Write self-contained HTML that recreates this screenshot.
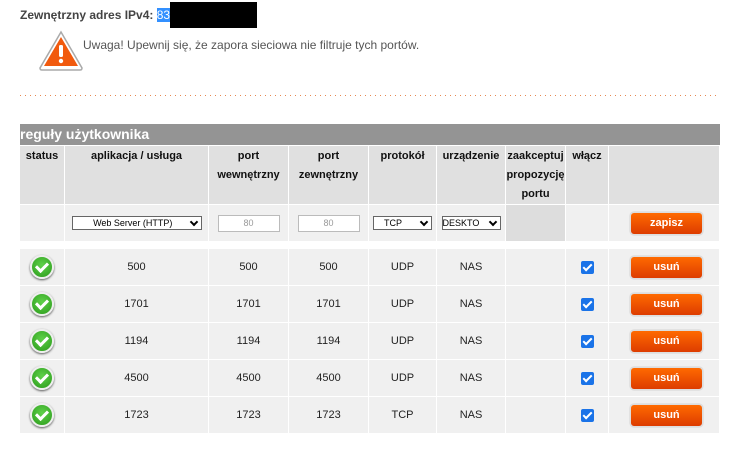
<!DOCTYPE html>
<html><head><meta charset="utf-8">
<style>
body{margin:0;width:741px;height:460px;background:#fff;font-family:"Liberation Sans",Arial,sans-serif;position:relative;overflow:hidden}
.abs{position:absolute}
table{position:absolute;left:19px;top:145px;border-collapse:separate;border-spacing:1px;table-layout:fixed}
td{padding:0;text-align:center;font-size:11px;color:#222;background:#f0f0f0}
tr.h td{background:#e0e0e0;vertical-align:top;line-height:19px;height:57px;padding-top:1px;color:#111;font-weight:bold}
tr.d td{height:36px}
tr.sp td{background:#fff;height:6px}
.ok{display:inline-block;width:20px;height:20px;border-radius:50%;background:radial-gradient(circle at 50% 40%,#5fd14a,#2a9a1a);border:2px solid #eee;box-shadow:0 1px 2px #555;position:relative;vertical-align:middle}
.ok:after{content:"";position:absolute;left:6px;top:3px;width:5px;height:9px;border:solid #fff;border-width:0 3px 3px 0;transform:rotate(45deg)}
.btn{display:inline-block;width:71px;height:21px;line-height:21px;border-radius:4px;background:linear-gradient(#ff6a00,#dd3c00);color:#fff;font-size:11px;font-weight:bold;border:1px solid #ddd;box-shadow:0 0 1px #999;margin-left:5px}
.cb{display:inline-block;width:13px;height:13px;background:#1a73e8;border-radius:2px;position:relative;vertical-align:middle}
.cb:after{content:"";position:absolute;left:4px;top:1px;width:3px;height:7px;border:solid #fff;border-width:0 2px 2px 0;transform:rotate(45deg)}
.sel{display:inline-block;border:1px solid #666;background:#fff;height:12px;font-size:9px;line-height:12px;text-align:left;position:relative;color:#000;vertical-align:middle}
.sel b{position:absolute;right:4px;top:2px;width:4px;height:4px;border:solid #000;border-width:0 2px 2px 0;transform:rotate(45deg)}
.inp{display:inline-block;border:1px solid #bbb;background:#fff;height:15px;width:60px;font-size:9px;color:#999;line-height:15px;vertical-align:middle}
</style></head><body>
<div class="abs" style="left:20px;top:8px;font-size:12px;font-weight:bold;color:#444">Zewnętrzny adres IPv4: <span style="background:#3390ff;color:#fff;font-weight:normal">83</span></div>
<div class="abs" style="left:170px;top:2px;width:87px;height:26px;background:#000"></div>
<svg class="abs" style="left:38px;top:30px" width="46" height="42" viewBox="0 0 46 42">
<path d="M23 2 L44 38 Q44 40 42 40 L4 40 Q2 40 2 38 Z" fill="#fff" stroke="#aaa" stroke-width="1.5"/>
<path d="M23 7 L40 36 L6 36 Z" fill="#f15a0e"/>
<rect x="21" y="15" width="4" height="12" rx="1.5" fill="#fff"/><circle cx="23" cy="31" r="2.2" fill="#fff"/></svg>
<div class="abs" style="left:83px;top:38px;font-size:12px;color:#555">Uwaga! Upewnij się, że zapora sieciowa nie filtruje tych portów.</div>
<div class="abs" style="left:20px;top:95px;width:700px;height:1px;background-image:linear-gradient(90deg,#e8874f 1px,transparent 1px);background-size:5px 1px"></div>
<div class="abs" style="left:20px;top:124px;width:700px;height:21px;background:#949494;color:#fff;font-weight:bold;font-size:14px;line-height:21px">reguły użytkownika</div>
<table>
<colgroup><col style="width:44px"><col style="width:143px"><col style="width:79px"><col style="width:79px"><col style="width:67px"><col style="width:68px"><col style="width:59px"><col style="width:42px"><col style="width:110px"></colgroup>
<tr class="h"><td>status</td><td>aplikacja / usługa</td><td>port<br>wewnętrzny</td><td>port<br>zewnętrzny</td><td>protokół</td><td>urządzenie</td><td>zaakceptuj<br>propozycję<br>portu</td><td>włącz</td><td></td></tr>
<tr class="d"><td></td><td><span class="sel" style="width:128px;text-align:center">Web Server (HTTP)&nbsp;&nbsp;&nbsp;<b></b></span></td><td><span class="inp">80</span></td><td><span class="inp">80</span></td><td><span class="sel" style="width:57px">&nbsp;&nbsp;&nbsp;&nbsp;TCP<b></b></span></td><td><span class="sel" style="width:57px">DESKTO<b></b></span></td><td style="background:#ddd"></td><td></td><td><span class="btn">zapisz</span></td></tr>
<tr class="sp"><td colspan="9"></td></tr>
<tr class="d"><td><span class="ok"></span></td><td>500</td><td>500</td><td>500</td><td>UDP</td><td>NAS</td><td></td><td><span class="cb"></span></td><td><span class="btn">usuń</span></td></tr>
<tr class="d"><td><span class="ok"></span></td><td>1701</td><td>1701</td><td>1701</td><td>UDP</td><td>NAS</td><td></td><td><span class="cb"></span></td><td><span class="btn">usuń</span></td></tr>
<tr class="d"><td><span class="ok"></span></td><td>1194</td><td>1194</td><td>1194</td><td>UDP</td><td>NAS</td><td></td><td><span class="cb"></span></td><td><span class="btn">usuń</span></td></tr>
<tr class="d"><td><span class="ok"></span></td><td>4500</td><td>4500</td><td>4500</td><td>UDP</td><td>NAS</td><td></td><td><span class="cb"></span></td><td><span class="btn">usuń</span></td></tr>
<tr class="d"><td><span class="ok"></span></td><td>1723</td><td>1723</td><td>1723</td><td>TCP</td><td>NAS</td><td></td><td><span class="cb"></span></td><td><span class="btn">usuń</span></td></tr>
</table>
</body></html>
